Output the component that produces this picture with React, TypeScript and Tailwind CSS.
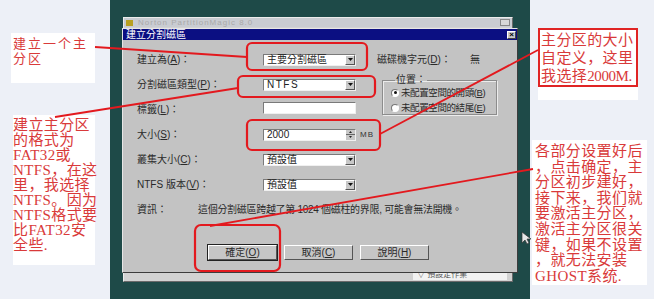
import React from "react";

const UI = "font-['Liberation_Sans','Noto_Sans_CJK_TC',sans-serif]";
const SERIF = "font-['Liberation_Serif','Noto_Sans_CJK_SC',serif]";

function Arrow() {
  return (
    <svg width="5" height="3" viewBox="0 0 5 3">
      <path d="M0 0h5L2.5 3z" fill="#111" />
    </svg>
  );
}

function Combo({ value, wide }: { value: string; wide?: boolean }) {
  return (
    <div className="flex h-[12px] w-[93px] items-center border border-b-[#f0f0f0] border-l-[#7a7a7a] border-r-[#f0f0f0] border-t-[#7a7a7a] bg-white">
      <span className={`flex-1 pl-[3px] text-[10px] leading-none text-[#222] ${wide ? "tracking-[1.5px]" : ""}`}>{value}</span>
      <span className="flex h-[10px] w-[10px] items-center justify-center border border-b-[#555] border-l-white border-r-[#555] border-t-white bg-[#c8c8c8]">
        <Arrow />
      </span>
    </div>
  );
}

function Btn({ children, primary }: { children: React.ReactNode; primary?: boolean }) {
  return (
    <div className={primary ? "border border-[#222]" : "border border-transparent"}>
      <div className="flex h-[15px] w-[69px] items-center justify-center border border-b-[#555] border-l-white border-r-[#555] border-t-white bg-[#c6c6c6] text-[10px] leading-none text-[#2a2a2a]">
        {children}
      </div>
    </div>
  );
}

function Radio({ checked, children }: { checked?: boolean; children: React.ReactNode }) {
  return (
    <div className="flex h-[15px] items-center gap-[2px]">
      <span className="flex h-[8px] w-[8px] shrink-0 items-center justify-center rounded-full border border-b-white border-l-[#777] border-r-white border-t-[#777] bg-white">
        {checked && <span className="h-[3px] w-[3px] rounded-full bg-[#111]" />}
      </span>
      <span className="whitespace-nowrap text-[9.5px] leading-none tracking-[-0.4px] text-[#2a2a2a]">{children}</span>
    </div>
  );
}

function Row({ label, children }: { label: React.ReactNode; children?: React.ReactNode }) {
  return (
    <div className="flex h-[25px] items-center">
      <span className="w-[126px] text-[10px] leading-none text-[#2a2a2a]">{label}</span>
      {children}
    </div>
  );
}

function Dialog() {
  return (
    <div className={`absolute left-[12px] top-[28px] flex h-[245px] w-[396px] flex-col border border-b-[#3c3c3c] border-l-[#e6e6e6] border-r-[#3c3c3c] border-t-[#e6e6e6] bg-[#c3c3c3] ${UI}`}>
      <div className="flex h-[11px] items-center justify-between bg-[#0b0f82] pl-[3px] pr-[1px]">
        <span className="text-[10px] leading-none text-white">建立分割磁區</span>
        <span className="flex h-[8px] w-[9px] items-center justify-center border border-b-[#444] border-l-white border-r-[#444] border-t-white bg-[#c8c8c8] text-[8px] font-bold leading-none text-black">×</span>
      </div>

      <div className="flex pl-[14px] pt-[7px]">
        <div className="w-[240px]">
          <Row label={<>建立為(<u>A</u>)：</>}>
            <Combo value="主要分割磁區" />
          </Row>
          <Row label={<>分割磁區類型(<u>P</u>)：</>}>
            <Combo value="NTFS" wide />
          </Row>
          <Row label={<>標籤(<u>L</u>)：</>}>
            <div className="-mt-[4px] h-[12px] w-[93px] border border-b-[#f0f0f0] border-l-[#7a7a7a] border-r-[#f0f0f0] border-t-[#7a7a7a] bg-white" />
          </Row>
          <Row label={<>大小(<u>S</u>)：</>}>
            <div className="flex h-[12px] w-[93px] items-center border border-b-[#f0f0f0] border-l-[#7a7a7a] border-r-[#f0f0f0] border-t-[#7a7a7a] bg-white">
              <span className="flex-1 pl-[3px] text-[10px] leading-none text-[#222]">2000</span>
              <span className="flex h-[10px] w-[9px] flex-col">
                <span className="flex h-[5px] items-center justify-center border-b border-b-[#666] bg-[#c8c8c8]">
                  <svg width="3" height="2" viewBox="0 0 3 2"><path d="M0 2h3L1.5 0z" fill="#222" /></svg>
                </span>
                <span className="flex h-[5px] items-center justify-center bg-[#c8c8c8]">
                  <svg width="3" height="2" viewBox="0 0 3 2"><path d="M0 0h3L1.5 2z" fill="#222" /></svg>
                </span>
              </span>
            </div>
            <span className="ml-[4px] text-[8px] tracking-[1px] leading-none text-[#333]">MB</span>
          </Row>
          <Row label={<>叢集大小(<u>C</u>)：</>}>
            <Combo value="預設值" />
          </Row>
          <Row label={<>NTFS 版本(<u>V</u>)：</>}>
            <Combo value="預設值" />
          </Row>
        </div>

        <div className="flex flex-col">
          <div className="flex h-[25px] items-center text-[10px] leading-none text-[#2a2a2a]">
            <span className="w-[93px]">磁碟機字元(<u>D</u>)：</span>
            <span>無</span>
          </div>
          <fieldset className="ml-[5px] mt-[3px] h-[40px] w-[115px] border border-[#8c8c8c] pl-[8px] shadow-[inset_1px_1px_0_#ececec,1px_1px_0_#ececec]">
            <legend className="ml-[4px] px-[1px] text-[10px] leading-none text-[#2a2a2a]">位置：</legend>
            <Radio checked>未配置空間的開頭(<u>B</u>)</Radio>
            <Radio>未配置空間的結尾(<u>E</u>)</Radio>
          </fieldset>
        </div>
      </div>

      <div className="flex h-[25px] items-center pl-[14px] text-[10px] leading-none text-[#2a2a2a]">
        <span className="w-[61px]">資訊：</span>
        <span className="tracking-[-0.3px]">這個分割磁區跨越了第 1024 個磁柱的界限, 可能會無法開機。</span>
      </div>

      <div className="mt-[22px] flex gap-[5px] pl-[84px]">
        <Btn primary>確定(<u>O</u>)</Btn>
        <Btn>取消(<u>C</u>)</Btn>
        <Btn>說明(<u>H</u>)</Btn>
      </div>
    </div>
  );
}

function Desktop() {
  return (
    <main className="relative h-[299px] w-[420px] bg-[#1e4a48]">
      <div className={`absolute left-[13px] top-[17px] h-[265px] w-[390px] border border-b-[#6a6a6a] border-l-[#ececec] border-r-[#6a6a6a] border-t-[#ececec] bg-[#d2d2d2] ${UI}`}>
        <div className="flex h-[9px] items-center justify-between bg-[#c9ccd2] px-[2px]">
          <div className="flex items-center gap-[5px]">
            <span className="h-[6px] w-[7px] bg-[#b8a020]" />
            <span className="text-[8px] leading-none tracking-[1px] text-[#a9a9a9]">Norton PartitionMagic 8.0</span>
          </div>
          <span className="h-[7px] w-[10px] border border-[#888] bg-[#d8d8d8]" />
        </div>
        <div className="absolute bottom-[1px] left-[289px] flex h-[11px] w-[94px] items-center bg-[#f2f2f2] pl-[4px] text-[8px] leading-none text-[#555]">
          ▽ 預設定作業
        </div>
      </div>
      <Dialog />
    </main>
  );
}

export default function App() {
  const red = "text-[#d93a3a]";
  return (
    <div className="relative flex h-[299px] w-[654px] overflow-hidden bg-[#edf0f7]">
      <aside className="flex w-[110px] flex-col">
        <div className={`ml-[11px] mt-[33px] h-[50px] w-[84px] whitespace-nowrap bg-white pl-[2px] pt-[3px] text-[13px] leading-[15px] tracking-[2px] ${red} font-['Liberation_Sans','Noto_Sans_CJK_SC',sans-serif]`}>
          建立一个主
          <br />
          分区
        </div>
        <div className={`ml-[13px] mt-[32px] h-[150px] w-[82px] whitespace-nowrap bg-white pt-[3px] text-[15px] leading-[15px] tracking-[0.4px] ${red} ${SERIF}`}>
          建立主分区<br />
          的格式为<br />
          FAT32或<br />
          NTFS，在这<br />
          里，我选择<br />
          NTFS。因为<br />
          NTFS格式要<br />
          比FAT32安<br />
          全些.
        </div>
      </aside>

      <Desktop />

      <aside className="flex w-[124px] flex-col">
        <div className="ml-[8px] mt-[28px] h-[72px] w-[100px] bg-white">
          <div className={`h-[59px] whitespace-nowrap border-2 border-[#e02424] pl-[1px] pt-[1px] text-[15px] leading-[18px] tracking-[0.4px] ${red} ${SERIF}`}>
            主分区的大小<br />
            自定义，这里<br />
            我选择<span className="tracking-[-0.4px]">2000M.</span>
          </div>
        </div>
        <div className={`ml-[2px] mt-[40px] h-[145px] w-[115px] whitespace-nowrap bg-white pl-[3px] pt-[4px] text-[15px] leading-[15.6px] tracking-[0.4px] ${red} ${SERIF}`}>
          各部分设置好后<br />
          ，点击确定，主<br />
          分区初步建好，<br />
          接下来，我们就<br />
          要激活主分区，<br />
          激活主分区很关<br />
          键，如果不设置<br />
          ，就无法安装<br />
          GHOST系统.
        </div>
      </aside>

      <svg className="pointer-events-none absolute inset-0" width="654" height="299" viewBox="0 0 654 299">
        <g fill="none" stroke="#e3191e" strokeWidth="2.2">
          <rect x="247" y="43" width="120" height="27" rx="5" />
          <rect x="238" y="76" width="137" height="21" rx="5" />
          <rect x="247" y="120" width="133" height="30" rx="5" />
          <rect x="195" y="225" width="85" height="46" rx="6" />
        </g>
        <g stroke="#e3191e" strokeWidth="1.8">
          <line x1="95" y1="47" x2="247" y2="57" />
          <line x1="55" y1="117" x2="238" y2="88" />
          <line x1="380" y1="134" x2="538" y2="50" />
          <line x1="210" y1="226" x2="533" y2="169" />
        </g>
        <path d="M522 232v11l3-3 2 4 2-1-2-4h4z" fill="#e8e8e8" stroke="#333" strokeWidth="0.7" />
      </svg>
    </div>
  );
}
